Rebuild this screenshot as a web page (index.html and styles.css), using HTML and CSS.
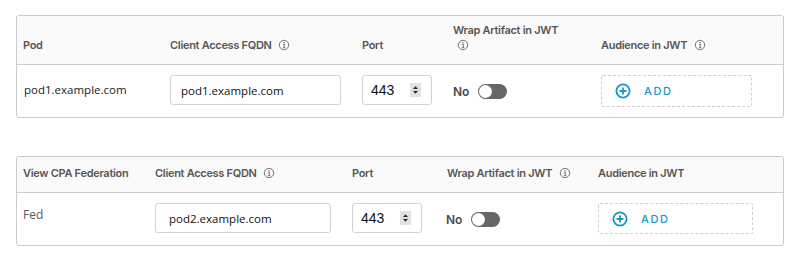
FILE: index.html
```html
<!DOCTYPE html>
<html>
<head>
<meta charset="utf-8">
<link rel="stylesheet" href="styles.css">
</head>
<body>
<div class="page">
  <div class="panel panel-a">
    <div class="grid head">
      <div class="th">Pod</div>
      <div class="th">Client Access FQDN <span class="info"><svg viewBox="0 0 12 12" width="12" height="12"><circle cx="6" cy="6" r="4.7" fill="none" stroke="#666" stroke-width="0.9"/><circle cx="6" cy="3.7" r="0.7" fill="#666"/><path d="M5 5.4h1.3v3.2M4.9 8.7h2.4" fill="none" stroke="#666" stroke-width="0.9"/></svg></span></div>
      <div class="th">Port</div>
      <div class="th th-wrap">Wrap Artifact in JWT <span class="info"><svg viewBox="0 0 12 12" width="12" height="12"><circle cx="6" cy="6" r="4.7" fill="none" stroke="#666" stroke-width="0.9"/><circle cx="6" cy="3.7" r="0.7" fill="#666"/><path d="M5 5.4h1.3v3.2M4.9 8.7h2.4" fill="none" stroke="#666" stroke-width="0.9"/></svg></span></div>
      <div class="th">Audience in JWT <span class="info"><svg viewBox="0 0 12 12" width="12" height="12"><circle cx="6" cy="6" r="4.7" fill="none" stroke="#666" stroke-width="0.9"/><circle cx="6" cy="3.7" r="0.7" fill="#666"/><path d="M5 5.4h1.3v3.2M4.9 8.7h2.4" fill="none" stroke="#666" stroke-width="0.9"/></svg></span></div>
    </div>
    <div class="grid row">
      <div class="td td-text">pod1.example.com</div>
      <div class="td"><div class="field fqdn">pod1.example.com</div></div>
      <div class="td"><div class="field port"><span>443</span><span class="spin"><svg viewBox="0 0 11 14" width="11" height="14"><rect width="11" height="14" fill="#e2e2e2"/><path d="M3 6L5.5 3.3L8 6Z M3 8L5.5 10.7L8 8Z" fill="#2a2a2a"/><path d="M0.5 7h10" stroke="#cfcfcf" stroke-width="0.6"/></svg></span></div></div>
      <div class="td"><div class="toggle-wrap"><span class="no">No</span><span class="toggle"></span></div></div>
      <div class="td"><div class="add"><svg viewBox="0 0 16 16" width="16" height="16"><circle cx="8" cy="8" r="6.6" fill="none" stroke="#1a93d2" stroke-width="1.8"/><path d="M8 4.6v6.8M4.6 8h6.8" stroke="#1a93d2" stroke-width="1.8"/></svg><span class="add-label">ADD</span></div></div>
    </div>
  </div>

  <div class="panel panel-b">
    <div class="grid head">
      <div class="th">View CPA Federation</div>
      <div class="th">Client Access FQDN <span class="info"><svg viewBox="0 0 12 12" width="12" height="12"><circle cx="6" cy="6" r="4.7" fill="none" stroke="#666" stroke-width="0.9"/><circle cx="6" cy="3.7" r="0.7" fill="#666"/><path d="M5 5.4h1.3v3.2M4.9 8.7h2.4" fill="none" stroke="#666" stroke-width="0.9"/></svg></span></div>
      <div class="th">Port</div>
      <div class="th">Wrap Artifact in JWT <span class="info"><svg viewBox="0 0 12 12" width="12" height="12"><circle cx="6" cy="6" r="4.7" fill="none" stroke="#666" stroke-width="0.9"/><circle cx="6" cy="3.7" r="0.7" fill="#666"/><path d="M5 5.4h1.3v3.2M4.9 8.7h2.4" fill="none" stroke="#666" stroke-width="0.9"/></svg></span></div>
      <div class="th">Audience in JWT</div>
    </div>
    <div class="grid row">
      <div class="td td-text td-muted">Fed</div>
      <div class="td"><div class="field fqdn">pod2.example.com</div></div>
      <div class="td"><div class="field port"><span>443</span><span class="spin"><svg viewBox="0 0 11 14" width="11" height="14"><rect width="11" height="14" fill="#e2e2e2"/><path d="M3 6L5.5 3.3L8 6Z M3 8L5.5 10.7L8 8Z" fill="#2a2a2a"/><path d="M0.5 7h10" stroke="#cfcfcf" stroke-width="0.6"/></svg></span></div></div>
      <div class="td"><div class="toggle-wrap"><span class="no">No</span><span class="toggle"></span></div></div>
      <div class="td"><div class="add"><svg viewBox="0 0 16 16" width="16" height="16"><circle cx="8" cy="8" r="6.6" fill="none" stroke="#1a93d2" stroke-width="1.8"/><path d="M8 4.6v6.8M4.6 8h6.8" stroke="#1a93d2" stroke-width="1.8"/></svg><span class="add-label">ADD</span></div></div>
    </div>
  </div>
</div>
</body>
</html>
```

FILE: styles.css
```css
* { box-sizing: border-box; }
html, body { margin: 0; padding: 0; background: #fff; }
body { width: 805px; height: 258px; overflow: hidden; }

.page {
  padding: 15px 21px 0 16px;
  display: flex;
  flex-direction: column;
  gap: 38px;
}

.panel {
  border: 1px solid #cccccc;
  border-radius: 3px;
  background: #fff;
  overflow: hidden;
}

.grid { display: grid; }
.panel-a .grid { grid-template-columns: 147px 192px 91px 148px 1fr; }
.panel-b .grid { grid-template-columns: 132px 197px 94px 152px 1fr; }

.head {
  background: #fafafa;
  border-bottom: 1px solid #cccccc;
  align-items: end;
}
.panel-a .head { height: 49px; }
.panel-b .head { height: 36px; }

.th {
  padding: 0 6px 11px 6px;
  font-family: "Inter", "Lato", sans-serif;
  font-weight: 600;
  font-size: 11px;
  letter-spacing: -0.3px;
  line-height: 15px;
  color: #565656;
}
.panel-b .th:nth-child(4) { padding-left: 7px; }
.panel-b .th:nth-child(5) { padding-left: 6px; }
.th-wrap { max-width: 124px; }

.info {
  display: inline-block;
  vertical-align: -2px;
  margin-left: 4px;
  width: 12px;
  height: 12px;
}
.info svg { display: block; }

.row {
  height: 52px;
  align-items: start;
  padding-top: 10px;
}
.td { padding-left: 6px; }
.td-text {
  font-family: "Open Sans", "Noto Sans", sans-serif;
  font-size: 11.5px;
  line-height: 30px;
  color: #1a1a1a;
  padding-left: 7px;
}
.panel-b .td-text { line-height: 24px; padding-left: 6px; }
.td-muted { color: #595959; font-size: 12px; }

.field {
  height: 30px;
  border: 1px solid #d2d2d2;
  border-radius: 3px;
  background: #fff;
  display: flex;
  align-items: center;
  color: #111;
}
.fqdn {
  font-family: "Open Sans", "Noto Sans", sans-serif;
  font-size: 11.5px;
  padding-left: 10px;
}
.panel-a .fqdn { width: 171px; }
.panel-b .fqdn { width: 176px; padding-left: 13px; }

.port {
  width: 70px;
  justify-content: space-between;
  padding: 0 10px 0 8px;
  font-family: "Liberation Sans", Arial, sans-serif;
  font-size: 14px;
}
.spin { display: block; width: 11px; height: 14px; }
.spin svg { display: block; }

.toggle-wrap {
  display: flex;
  align-items: center;
  gap: 9px;
  height: 32px;
}
.no {
  font-family: "Inter", "Lato", sans-serif;
  font-weight: 600;
  font-size: 12px;
  color: #4a4a4a;
}
.toggle {
  position: relative;
  width: 29px;
  height: 15px;
  border-radius: 8px;
  background: #666666;
}
.toggle::before {
  content: "";
  position: absolute;
  left: 1px;
  top: 1px;
  width: 13px;
  height: 13px;
  border-radius: 50%;
  background: #fff;
}

.add {
  height: 32px;
  border: 1px dashed #cfcfcf;
  border-radius: 2px;
  display: flex;
  align-items: center;
  padding-left: 13px;
  gap: 13px;
}
.panel-a .add { width: 151px; }
.panel-b .add { width: 155px; height: 31px; padding-left: 13px; }
.add svg { display: block; }
.add-label {
  font-family: "Inter", "Lato", sans-serif;
  font-size: 11px;
  font-weight: 500;
  letter-spacing: 1.6px;
  color: #1a93d2;
}
```
